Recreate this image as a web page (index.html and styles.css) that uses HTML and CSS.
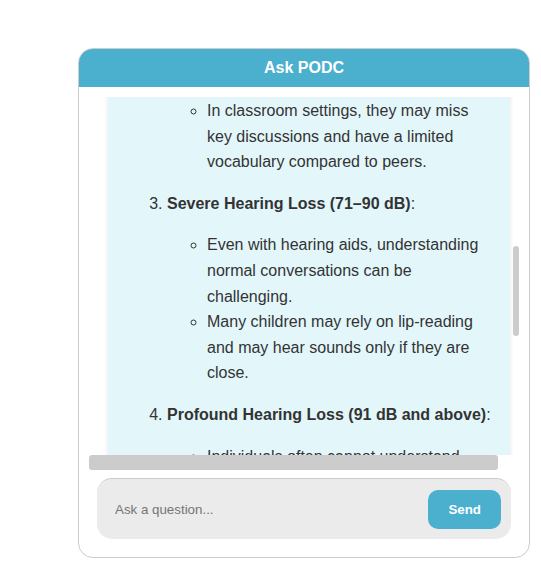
FILE: index.html
```html
<!DOCTYPE html>
<html lang="en">
<head>
<meta charset="utf-8">
<title>Ask PODC</title>
<link rel="stylesheet" href="styles.css">
</head>
<body>
<main class="chat">
  <h1 class="chat-header">Ask PODC</h1>
  <section class="chat-body">
    <div class="viewport">
      <article class="message">
        <ul class="points">
          <li>In classroom settings, they may miss key discussions and have a limited vocabulary compared to peers.</li>
        </ul>
        <ol class="levels" start="3">
          <li>
            <p><strong>Severe Hearing Loss (71–90 dB)</strong>:</p>
            <ul>
              <li>Even with hearing aids, understanding normal conversations can be challenging.</li>
              <li>Many children may rely on lip-reading and may hear sounds only if they are close.</li>
            </ul>
          </li>
          <li>
            <p><strong>Profound Hearing Loss (91 dB and above)</strong>:</p>
            <ul>
              <li>Individuals often cannot understand</li>
            </ul>
          </li>
        </ol>
      </article>
    </div>
    <div class="track-y"><div class="thumb-y"></div></div>
    <div class="thumb-x"></div>
  </section>
  <form class="composer">
    <input class="question" type="text" placeholder="Ask a question..." aria-label="Ask a question">
    <button class="send" type="button">Send</button>
  </form>
</main>
</body>
</html>
```
FILE: styles.css
```css
* {
  box-sizing: border-box;
}

body {
  margin: 0;
  padding: 48px 11px 19px 78px;
  background: #fff;
  color: #333;
  font-family: "Liberation Sans", Arial, sans-serif;
  font-size: 16px;
  line-height: 1.6;
}

.chat {
  display: flex;
  flex-direction: column;
  height: calc(100vh - 67px);
  border: 1px solid #ccc;
  border-radius: 15px;
  overflow: hidden;
}

.chat-header {
  margin: 0;
  padding: 10px;
  background: #4ab0ce;
  color: #fff;
  font-size: 16px;
  line-height: 18px;
  text-align: center;
}

.chat-body {
  flex: 1;
  min-height: 0;
  display: grid;
  grid-template-columns: 1fr 6px;
  grid-template-rows: minmax(0, 1fr) 15px;
  margin: 10px 10px 8px;
}

.viewport {
  overflow: hidden;
}

.message {
  margin: -20px 3px 0 19px;
  padding: 21px 19px 20px;
  background: #e3f7fb;
  box-shadow: 0 2px 5px rgba(0, 0, 0, 0.1);
}

ul,
ol {
  margin: 0;
  padding-left: 40px;
}

ul {
  list-style: circle;
}

.points {
  padding-left: 80px;
}

p {
  margin: 16px 0;
}

.track-y {
  display: flex;
  flex-direction: column;
}

.track-y::before {
  content: "";
  flex: 5;
}

.track-y::after {
  content: "";
  flex: 4;
}

.thumb-y {
  flex: 3;
  border-radius: 3px;
  background: #ccc;
}

.thumb-x {
  margin-right: 15px;
  border-radius: 3px;
  background: #ccc;
}

.composer {
  display: flex;
  margin: 0 18px 18px;
  padding: 11px 10px 10px;
  border-top: 1px solid #ccc;
  border-radius: 15px;
  background: #ebebeb;
}

.question {
  flex: 1;
  min-width: 0;
  padding: 0 8px;
  border: 0;
  outline: 0;
  background: transparent;
  font-family: inherit;
}

.question::placeholder {
  color: #757575;
}

.send {
  padding: 12px 20px;
  border: 0;
  border-radius: 10px;
  background: #4ab0ce;
  color: #fff;
  font-family: inherit;
  font-weight: bold;
}
```
